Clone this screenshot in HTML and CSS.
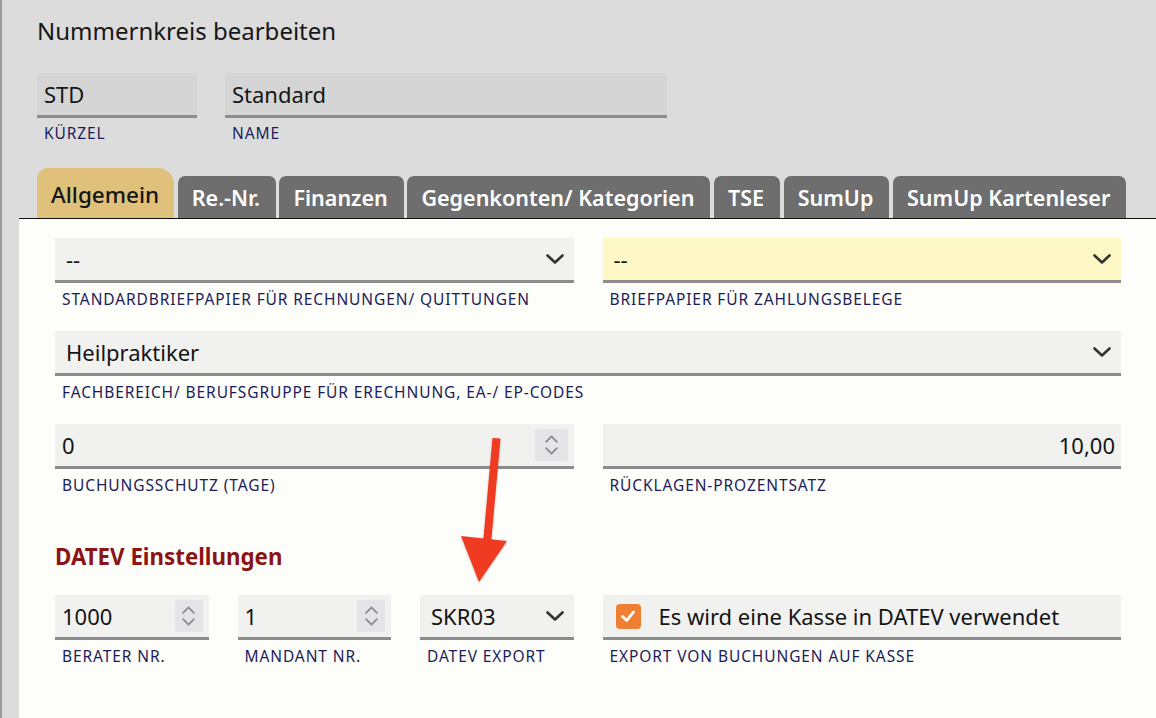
FILE: index.html
```html
<!DOCTYPE html>
<html lang="de">
<head>
<meta charset="utf-8">
<title>Nummernkreis bearbeiten</title>
<link rel="stylesheet" href="styles.css">
</head>
<body>
<div class="window">
  <h1 class="title">Nummernkreis bearbeiten</h1>

  <div class="head">
    <div class="hfield short">
      <div class="hbox">STD</div>
      <div class="hlabel">KÜRZEL</div>
    </div>
    <div class="hfield long">
      <div class="hbox">Standard</div>
      <div class="hlabel">NAME</div>
    </div>
  </div>

  <div class="tabs">
    <div class="tab active">Allgemein</div>
    <div class="tab">Re.-Nr.</div>
    <div class="tab">Finanzen</div>
    <div class="tab">Gegenkonten/ Kategorien</div>
    <div class="tab">TSE</div>
    <div class="tab">SumUp</div>
    <div class="tab">SumUp Kartenleser</div>
  </div>

  <div class="panel">
    <div class="grid2">
      <div class="field">
        <div class="box select"><span class="val">--</span>
          <svg class="chev" viewBox="0 0 18 10"><path d="M1.5 1.5 L9 8.5 L16.5 1.5" /></svg>
        </div>
        <div class="label">STANDARDBRIEFPAPIER FÜR RECHNUNGEN/ QUITTUNGEN</div>
      </div>
      <div class="field">
        <div class="box select yellow"><span class="val">--</span>
          <svg class="chev" viewBox="0 0 18 10"><path d="M1.5 1.5 L9 8.5 L16.5 1.5" /></svg>
        </div>
        <div class="label">BRIEFPAPIER FÜR ZAHLUNGSBELEGE</div>
      </div>
      <div class="field span2">
        <div class="box select"><span class="val">Heilpraktiker</span>
          <svg class="chev" viewBox="0 0 18 10"><path d="M1.5 1.5 L9 8.5 L16.5 1.5" /></svg>
        </div>
        <div class="label">FACHBEREICH/ BERUFSGRUPPE FÜR ERECHNUNG, EA-/ EP-CODES</div>
      </div>
      <div class="field">
        <div class="box input"><span class="val">0</span>
          <span class="spin"><svg viewBox="0 0 14 22"><path d="M2 8 L7 3 L12 8 M2 14 L7 19 L12 14" /></svg></span>
        </div>
        <div class="label">BUCHUNGSSCHUTZ (TAGE)</div>
      </div>
      <div class="field">
        <div class="box input right"><span class="val">10,00</span></div>
        <div class="label">RÜCKLAGEN-PROZENTSATZ</div>
      </div>
    </div>

    <h2 class="section">DATEV Einstellungen</h2>

    <div class="grid2">
      <div class="grid3">
        <div class="field">
          <div class="box input"><span class="val">1000</span>
            <span class="spin small"><svg viewBox="0 0 14 22"><path d="M2 8 L7 3 L12 8 M2 14 L7 19 L12 14" /></svg></span>
          </div>
          <div class="label">BERATER NR.</div>
        </div>
        <div class="field">
          <div class="box input"><span class="val">1</span>
            <span class="spin small"><svg viewBox="0 0 14 22"><path d="M2 8 L7 3 L12 8 M2 14 L7 19 L12 14" /></svg></span>
          </div>
          <div class="label">MANDANT NR.</div>
        </div>
        <div class="field">
          <div class="box select"><span class="val">SKR03</span>
            <svg class="chev" viewBox="0 0 18 10"><path d="M1.5 1.5 L9 8.5 L16.5 1.5" /></svg>
          </div>
          <div class="label">DATEV EXPORT</div>
        </div>
      </div>
      <div class="field">
        <div class="box check">
          <span class="cb"><svg viewBox="0 0 24 24"><path d="M6 12.5 L10.5 17 L18 7.5" /></svg></span>
          <span class="val">Es wird eine Kasse in DATEV verwendet</span>
        </div>
        <div class="label">EXPORT VON BUCHUNGEN AUF KASSE</div>
      </div>
    </div>
  </div>

  <svg class="arrow" width="1156" height="718" viewBox="0 0 1156 718">
    <defs>
      <filter id="sh" x="-20%" y="-20%" width="140%" height="140%">
        <feDropShadow dx="0" dy="1" stdDeviation="1.2" flood-color="#000" flood-opacity="0.25"/>
      </filter>
    </defs>
    <g filter="url(#sh)" fill="#ee3a23">
      <polygon points="492.5,438 500.5,438.6 491,544 483,543.4" />
      <polygon points="461,536 507,541 479,582" />
    </g>
  </svg>
</div>
</body>
</html>
```

FILE: styles.css
```css
* { box-sizing: border-box; }

html, body {
  margin: 0;
  padding: 0;
}

body {
  background: #dcdcdc;
  font-family: "Noto Sans", "Open Sans", sans-serif;
  color: #161616;
  width: 1156px;
  height: 718px;
  overflow: hidden;
}

.window {
  position: relative;
  min-height: 718px;
  border-left: 2px solid #9a9a9a;
}

.title {
  margin: 0;
  padding: 15px 0 0 35px;
  font-size: 24px;
  line-height: 32px;
  font-weight: 400;
  color: #171717;
}

.head {
  display: flex;
  gap: 28px;
  padding-left: 35px;
  margin-top: 26px;
}

.hfield.short { width: 160px; }
.hfield.long { width: 442px; }

.hbox {
  height: 45px;
  background: #d5d5d5;
  border-bottom: 3px solid #8c8c8c;
  padding-left: 7px;
  font-size: 22px;
  line-height: 42px;
  color: #161616;
}

.hlabel {
  margin-top: 5px;
  padding-left: 7px;
  font-size: 15.5px;
  letter-spacing: 0.9px;
  line-height: 20px;
  color: #1c1c5a;
}

.tabs {
  display: flex;
  align-items: flex-end;
  gap: 3.6px;
  height: 50px;
  margin-top: 25px;
  padding-left: 35px;
}

.tab {
  height: 42px;
  padding: 0 16px 0 14px;
  background: #6e6e6e;
  color: #ffffff;
  font-size: 21.5px;
  font-weight: 600;
  line-height: 43px;
  border-radius: 7px 7px 0 0;
  white-space: nowrap;
}

.tab.active {
  height: 50px;
  padding: 0 15px 0 14px;
  background: #dfc17b;
  color: #141414;
  font-size: 22.5px;
  font-weight: 500;
  line-height: 53px;
  border-radius: 11px 16px 0 0;
}

.panel {
  margin-left: 17px;
  background: #fdfdf9;
  border-top: 1px solid #111111;
  padding: 19px 35px 60px 36px;
  min-height: 500px;
}

.grid2 {
  display: grid;
  grid-template-columns: 1fr 1fr;
  column-gap: 29px;
  row-gap: 22px;
}

.grid3 {
  display: grid;
  grid-template-columns: 1fr 1fr 1fr;
  column-gap: 29px;
}

.span2 { grid-column: 1 / span 2; }

.box {
  height: 45px;
  background: #f1f1ef;
  border-bottom: 3px solid #8c8c8c;
  display: flex;
  align-items: center;
  font-size: 22px;
  color: #141414;
}

.box.yellow { background: #fdf8c5; }

.box.select { padding: 0 10px 0 11px; }
.box.input { padding: 0 6px 0 7px; }
.box.input.right { justify-content: flex-end; }

.val {
  flex: 1;
  white-space: nowrap;
}

.box.input.right .val { flex: none; }

.chev {
  width: 18px;
  height: 10px;
  flex: none;
}

.chev path {
  fill: none;
  stroke: #333333;
  stroke-width: 2.6;
  stroke-linecap: round;
  stroke-linejoin: round;
}

.spin {
  width: 33px;
  height: 32px;
  background: #e4e4e9;
  border-radius: 2px;
  display: flex;
  align-items: center;
  justify-content: center;
  flex: none;
}

.spin.small { width: 28px; }

.spin svg {
  width: 15px;
  height: 24px;
}

.spin path {
  fill: none;
  stroke: #8a8a8f;
  stroke-width: 1.7;
  stroke-linecap: round;
  stroke-linejoin: round;
}

.label {
  margin-top: 6px;
  padding-left: 7px;
  font-size: 15.5px;
  letter-spacing: 0.9px;
  line-height: 20px;
  color: #1c1c5a;
  white-space: nowrap;
}

.section {
  margin: 47px 0 23px 0;
  font-size: 22.3px;
  line-height: 30px;
  font-weight: 700;
  color: #8b1414;
}

.box.check { padding-left: 13px; }

.cb {
  width: 25px;
  height: 25px;
  background: #ee7f33;
  border-radius: 4px;
  display: flex;
  align-items: center;
  justify-content: center;
  flex: none;
  margin-right: 18px;
}

.cb svg { width: 22px; height: 22px; }

.cb path {
  fill: none;
  stroke: #ffffff;
  stroke-width: 3;
  stroke-linecap: round;
  stroke-linejoin: round;
}

.arrow {
  position: absolute;
  left: -2px;
  top: 0;
  pointer-events: none;
}
```
